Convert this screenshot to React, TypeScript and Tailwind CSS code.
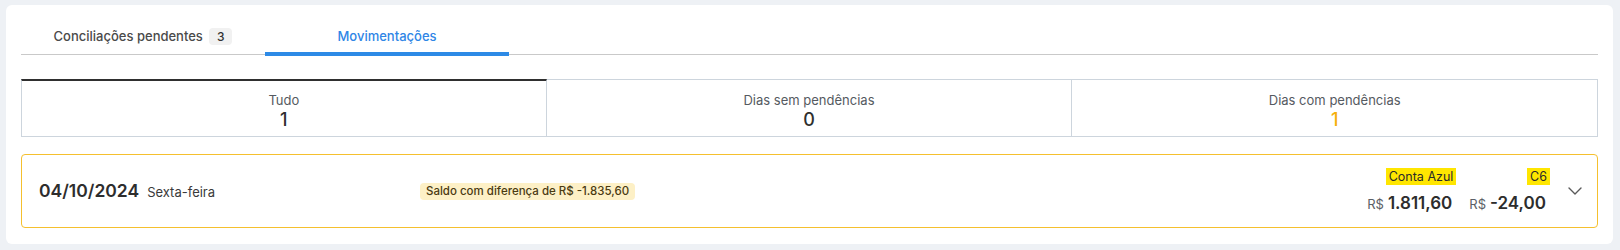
import { ChevronDown } from "lucide-react";

const stats = [
  { label: "Tudo", value: "1", active: true, color: "text-[#2f2f2f]" },
  { label: "Dias sem pendências", value: "0", active: false, color: "text-[#2f2f2f]" },
  { label: "Dias com pendências", value: "1", active: false, color: "text-[#f5b00b]" },
];

function Amount({ source, value }: { source: string; value: string }) {
  return (
    <div className="flex flex-col items-end">
      <span className="bg-[#ffe600] px-[3px] text-[12.5px] leading-[17px] text-[#2a2a2a]">{source}</span>
      <div className="mt-[6px] flex items-baseline gap-[4px] pr-[4px]">
        <span className="text-[13px] text-[#5b5f66]">R$</span>
        <span className="text-[17px] font-semibold leading-[24px] text-[#2d2d2d]">{value}</span>
      </div>
    </div>
  );
}

export default function App() {
  return (
    <div
      className="min-h-[250px] bg-[#eef1f5] pb-[6px] pl-[6px] pr-[7px] pt-[5px]"
      style={{ fontFamily: "Inter, 'Noto Sans', sans-serif" }}
    >
      <div className="rounded-md bg-white px-[15px] pb-[16px] pt-[16px]">
        {/* abas */}
        <div className="flex h-[34px] border-b border-[#c9c9c9]">
          <button className="-mb-px flex h-[35px] w-[244px] items-center justify-center gap-[6px] border-b-4 border-transparent text-[13px] font-medium text-[#4a4a4a]">
            Conciliações pendentes
            <span className="rounded-[4px] bg-[#f1f1f1] px-[8px] text-[12px] leading-[17px] text-[#333]">3</span>
          </button>
          <button className="-mb-px flex h-[35px] w-[244px] items-center justify-center border-b-4 border-[#2d8ae6] text-[13px] font-medium text-[#2f86e6]">
            Movimentações
          </button>
        </div>

        {/* resumo */}
        <div className="mt-6 grid grid-cols-3">
          {stats.map((s) => (
            <div
              key={s.label}
              className={
                s.active
                  ? "flex h-[58px] flex-col items-center justify-center border border-[#cdd5dd] border-t-2 border-t-[#2f2f2f] pt-[3px]"
                  : "flex h-[58px] flex-col items-center justify-center border-y border-r border-[#cdd5dd] pt-[4px]"
              }
            >
              <span className="text-[13px] leading-[18px] text-[#555a61]">{s.label}</span>
              <span className={`text-[18px] font-medium leading-[21px] ${s.color}`}>{s.value}</span>
            </div>
          ))}
        </div>

        {/* dia */}
        <div className="mt-[17px] flex h-[74px] items-center rounded-[4px] border border-[#f5c02e] pl-[17px] pr-[10px]">
          <div className="flex w-[381px] items-baseline gap-[8px]">
            <span className="text-[17.5px] font-semibold text-[#2d2d2d]">04/10/2024</span>
            <span className="text-[13px] text-[#3a3a3a]">Sexta-feira</span>
          </div>
          <span className="rounded-[4px] bg-[#fdf0c6] px-[6px] text-[11.5px] font-medium leading-[17px] text-[#4a3a12]">
            Saldo com diferença de R$ -1.835,60
          </span>
          <div className="ml-auto flex items-center gap-[13px]">
            <Amount source="Conta Azul" value="1.811,60" />
            <Amount source="C6" value="-24,00" />
            <ChevronDown size={24} strokeWidth={1.4} className="text-[#5a5a5a]" />
          </div>
        </div>
      </div>
    </div>
  );
}
